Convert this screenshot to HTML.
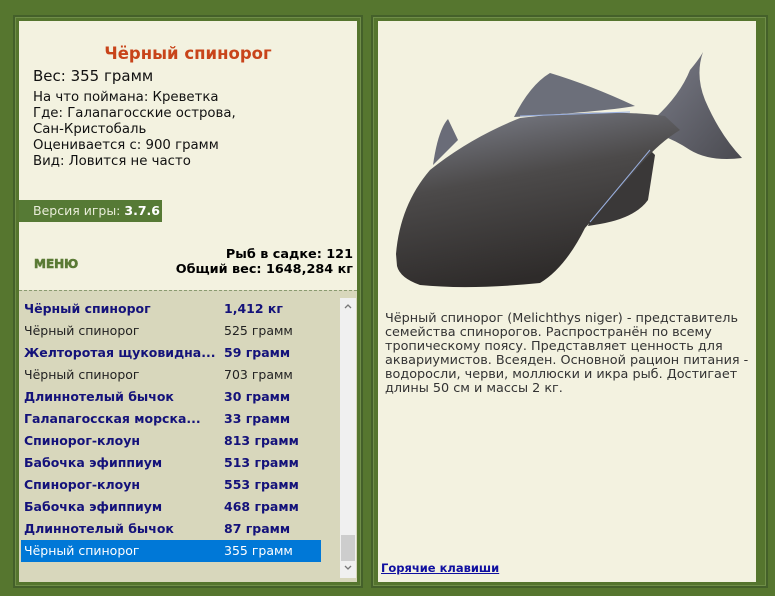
<!DOCTYPE html>
<html><head><meta charset="utf-8"><style>
*{margin:0;padding:0;box-sizing:border-box}
body{width:775px;height:596px;background:#56762f;font-family:"DejaVu Sans","Liberation Sans",sans-serif;position:relative;overflow:hidden;font-size:13px}
.frame{position:absolute;border:2px solid #44602a;box-shadow:inset 0 0 0 1px #6f8d48;background:#55752e}
.cream{position:absolute;background:#f3f2e0}
.abs{position:absolute;white-space:nowrap}
.row{position:absolute;left:21px;width:300px;height:22px;line-height:22px;font-size:12.5px}
.row span{position:absolute}
.row .n{left:3px}.row .w{left:203px}
.b{font-weight:bold;color:#14127a}
.r{color:#222}
.sel{background:#0078d7;color:#fff}
</style></head><body>
<div class="frame" style="left:13px;top:15px;width:350px;height:573px"></div>
<div class="cream" style="left:19px;top:21px;width:338px;height:561px"></div>
<div class="frame" style="left:371px;top:15px;width:397px;height:573px"></div>
<div class="cream" style="left:378px;top:21px;width:378px;height:561px"></div>

<div class="abs" style="left:19px;width:338px;top:44px;text-align:center;color:#c8441a;font-weight:bold;font-size:16.5px">Чёрный спинорог</div>
<div class="abs" style="left:33px;top:67px;font-size:15px;color:#111">Вес: 355 грамм</div>
<div class="abs" style="left:33px;top:90px;font-size:13.3px;line-height:16px;color:#111">На что поймана: Креветка<br>Где: Галапагосские острова,<br>Сан-Кристобаль<br>Оценивается с: 900 грамм<br>Вид: Ловится не часто</div>
<div class="abs" style="left:19px;top:200px;width:143px;height:22px;background:#567a35;color:#e8ecd8;font-size:12.5px;line-height:22px;padding-left:14px">Версия игры: <b style="color:#fff">3.7.6</b></div>
<div class="abs" style="left:34px;top:257px;font-size:12px;font-weight:900;color:#5a7a35;-webkit-text-stroke:0.6px #5a7a35">МЕНЮ</div>
<div class="abs" style="right:422px;top:247px;font-size:12.8px;font-weight:bold;color:#000;text-align:right;line-height:15px">Рыб в садке: 121<br>Общий вес: 1648,284 кг</div>

<div class="abs" style="left:19px;top:290px;width:338px;height:292px;background:#d8d7bc;border-top:1px dashed #8a9a70"></div>
<div class="abs" style="left:340px;top:298px;width:16px;height:280px;background:#f0f0f0"></div>
<div class="abs" style="left:341px;top:535px;width:14px;height:26px;background:#cdcdcd"></div>
<svg class="abs" style="left:340px;top:298px" width="16" height="280"><path d="M5,10 L8,7 L11,10" stroke="#777" stroke-width="1.3" fill="none"/><path d="M5,268 L8,271 L11,268" stroke="#777" stroke-width="1.3" fill="none"/></svg>

<div class="row b" style="top:298px"><span class="n">Чёрный спинорог</span><span class="w">1,412 кг</span></div>
<div class="row r" style="top:320px"><span class="n">Чёрный спинорог</span><span class="w">525 грамм</span></div>
<div class="row b" style="top:342px"><span class="n">Желторотая щуковидна...</span><span class="w">59 грамм</span></div>
<div class="row r" style="top:364px"><span class="n">Чёрный спинорог</span><span class="w">703 грамм</span></div>
<div class="row b" style="top:386px"><span class="n">Длиннотелый бычок</span><span class="w">30 грамм</span></div>
<div class="row b" style="top:408px"><span class="n">Галапагосская морска...</span><span class="w">33 грамм</span></div>
<div class="row b" style="top:430px"><span class="n">Спинорог-клоун</span><span class="w">813 грамм</span></div>
<div class="row b" style="top:452px"><span class="n">Бабочка эфиппиум</span><span class="w">513 грамм</span></div>
<div class="row b" style="top:474px"><span class="n">Спинорог-клоун</span><span class="w">553 грамм</span></div>
<div class="row b" style="top:496px"><span class="n">Бабочка эфиппиум</span><span class="w">468 грамм</span></div>
<div class="row b" style="top:518px"><span class="n">Длиннотелый бычок</span><span class="w">87 грамм</span></div>
<div class="row sel" style="top:540px"><span class="n">Чёрный спинорог</span><span class="w">355 грамм</span></div>

<svg class="abs" style="left:0;top:0" width="775" height="596">
<defs><linearGradient id="g" x1="0" y1="0" x2="0.3" y2="1"><stop offset="0" stop-color="#80838f"/><stop offset="0.45" stop-color="#4c4a4a"/><stop offset="1" stop-color="#2e2b2a"/></linearGradient>
<linearGradient id="t" x1="0" y1="0" x2="1" y2="1"><stop offset="0" stop-color="#7a7c88"/><stop offset="1" stop-color="#4a4a50"/></linearGradient></defs>
<path d="M514,117 Q530,85 550,73 Q590,85 635,106 Q600,112 514,117 Z" fill="#6c6f7a"/>
<path d="M433,165 Q438,130 448,119 L458,140 Z" fill="#6a6c78"/>
<path d="M655,118 Q680,95 690,70 Q700,58 703,52 Q695,75 705,100 Q720,135 742,158 Q710,162 690,150 Q675,140 660,135 Z" fill="url(#t)"/>
<path d="M650,150 L655,155 L648,200 Q635,218 600,224 L588,226 L600,195 Z" fill="#3a3838"/>
<path d="M396,254 Q400,205 430,170 Q470,138 520,118 Q600,108 665,116 L680,130 Q660,142 640,165 Q610,200 585,228 Q565,268 540,283 Q470,290 420,285 Q400,278 397,266 Z" fill="url(#g)"/>
<path d="M520,116 L630,112" stroke="#9ab0e0" stroke-width="1" fill="none"/>
<path d="M650,150 L590,222" stroke="#9ab0e0" stroke-width="1" fill="none"/>
</svg>

<div class="abs" style="left:385px;top:312px;font-size:12.8px;line-height:14px;color:#333;white-space:normal;width:370px">Чёрный спинорог (Melichthys niger) - представитель семейства спинорогов. Распространён по всему тропическому поясу. Представляет ценность для аквариумистов. Всеяден. Основной рацион питания - водоросли, черви, моллюски и икра рыб. Достигает длины 50 см и массы 2 кг.</div>
<div class="abs" style="left:381px;top:561px;font-size:11.5px;font-weight:bold;color:#1010a0;text-decoration:underline">Горячие клавиши</div>
</body></html>
